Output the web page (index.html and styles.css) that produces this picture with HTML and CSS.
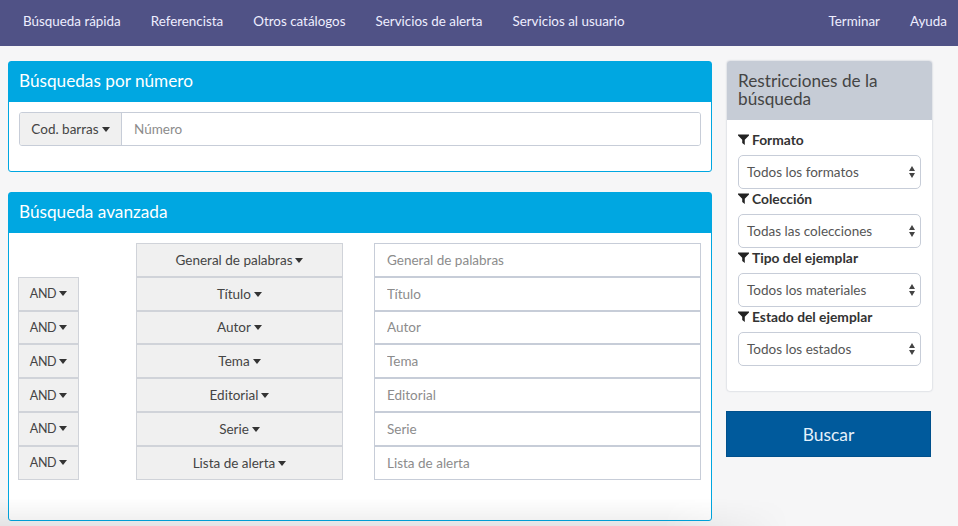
FILE: index.html
```html
<!DOCTYPE html>
<html lang="es">
<head>
  <meta charset="utf-8">
  <title>Búsqueda avanzada</title>
  <link rel="stylesheet" href="styles.css">
</head>
<body>
  <nav class="topbar">
    <ul class="menu">
      <li>Búsqueda rápida</li>
      <li>Referencista</li>
      <li>Otros catálogos</li>
      <li>Servicios de alerta</li>
      <li>Servicios al usuario</li>
    </ul>
    <ul class="menu">
      <li>Terminar</li>
      <li>Ayuda</li>
    </ul>
  </nav>

  <div class="page">
    <main class="main-col">
      <section class="panel panel-number">
        <h2 class="panel-title">Búsquedas por número</h2>
        <div class="number-body">
          <div class="input-group">
            <button class="addon">Cod. barras<span class="caret"></span></button>
            <input class="group-input" type="text" placeholder="Número">
          </div>
        </div>
      </section>

      <section class="panel panel-advanced">
        <h2 class="panel-title">Búsqueda avanzada</h2>
        <div class="adv-grid">
          <span></span>
          <button class="drop">General de palabras<span class="caret"></span></button>
          <input class="field" type="text" placeholder="General de palabras">

          <button class="drop op">AND<span class="caret"></span></button>
          <button class="drop">Título<span class="caret"></span></button>
          <input class="field" type="text" placeholder="Título">

          <button class="drop op">AND<span class="caret"></span></button>
          <button class="drop">Autor<span class="caret"></span></button>
          <input class="field" type="text" placeholder="Autor">

          <button class="drop op">AND<span class="caret"></span></button>
          <button class="drop">Tema<span class="caret"></span></button>
          <input class="field" type="text" placeholder="Tema">

          <button class="drop op">AND<span class="caret"></span></button>
          <button class="drop">Editorial<span class="caret"></span></button>
          <input class="field" type="text" placeholder="Editorial">

          <button class="drop op">AND<span class="caret"></span></button>
          <button class="drop">Serie<span class="caret"></span></button>
          <input class="field" type="text" placeholder="Serie">

          <button class="drop op">AND<span class="caret"></span></button>
          <button class="drop">Lista de alerta<span class="caret"></span></button>
          <input class="field" type="text" placeholder="Lista de alerta">
        </div>
      </section>
    </main>

    <aside class="side-col">
      <section class="side-panel">
        <h2 class="side-title">Restricciones de la búsqueda</h2>
        <div class="side-body">
          <label class="filter-label"><svg class="funnel" viewBox="0 0 12 12"><path d="M0 0.5h12v1L7.4 6.4V12L4.6 9.8V6.4L0 1.5z"/></svg>Formato</label>
          <div class="select-box">Todos los formatos<span class="updown"></span></div>
          <label class="filter-label"><svg class="funnel" viewBox="0 0 12 12"><path d="M0 0.5h12v1L7.4 6.4V12L4.6 9.8V6.4L0 1.5z"/></svg>Colección</label>
          <div class="select-box">Todas las colecciones<span class="updown"></span></div>
          <label class="filter-label"><svg class="funnel" viewBox="0 0 12 12"><path d="M0 0.5h12v1L7.4 6.4V12L4.6 9.8V6.4L0 1.5z"/></svg>Tipo del ejemplar</label>
          <div class="select-box">Todos los materiales<span class="updown"></span></div>
          <label class="filter-label"><svg class="funnel" viewBox="0 0 12 12"><path d="M0 0.5h12v1L7.4 6.4V12L4.6 9.8V6.4L0 1.5z"/></svg>Estado del ejemplar</label>
          <div class="select-box">Todos los estados<span class="updown"></span></div>
        </div>
      </section>
      <button class="search-btn">Buscar</button>
    </aside>
  </div>

  <div class="bottom-shade"></div>
</body>
</html>
```

FILE: styles.css
```css
* {
  box-sizing: border-box;
}

html, body {
  height: 100%;
  overflow: hidden;
}

body {
  position: relative;
  margin: 0;
  background: #f6f6f7;
  color: #444;
  font-family: "Lato", "Open Sans", sans-serif;
  font-size: 13.5px;
}

button, input {
  font-family: inherit;
  font-size: inherit;
}

.topbar {
  display: flex;
  justify-content: space-between;
  height: 46px;
  padding: 0 11px 0 23px;
  background: #505286;
  color: #eef;
  font-size: 13.4px;
}

.menu {
  display: flex;
  gap: 30px;
  margin: 0;
  padding: 0;
  list-style: none;
  line-height: 43px;
}

.page {
  display: flex;
  align-items: flex-start;
  padding: 15px 0 0 8px;
}

.main-col {
  width: 704px;
}

.panel {
  background: #fff;
  border: 1px solid #00a7e1;
  border-radius: 3px;
}

.panel-number {
  height: 111px;
  margin-bottom: 20px;
}

.panel-advanced {
  height: 329px;
}

.panel-title {
  height: 40px;
  margin: 0;
  padding: 0 10px;
  background: #00a7e1;
  color: #fff;
  font-size: 17.2px;
  font-weight: 400;
  line-height: 38px;
}

.number-body {
  padding: 10px 10px 0;
}

.input-group {
  display: flex;
  height: 34px;
  border: 1px solid #c7cdd8;
  border-radius: 3px;
  overflow: hidden;
}

.addon {
  width: 102px;
  padding: 0;
  background: #f0f0f0;
  border: 0;
  border-right: 1px solid #c7cdd8;
  color: #444;
}

.group-input {
  flex: 1;
  min-width: 0;
  padding: 0 12px;
  border: 0;
}

input::placeholder {
  color: #8c8c8c;
  opacity: 1;
}

.caret {
  display: inline-block;
  margin-left: 3px;
  vertical-align: 2px;
  border-top: 5px solid #333;
  border-left: 4.5px solid transparent;
  border-right: 4.5px solid transparent;
}

.adv-grid {
  display: grid;
  grid-template-columns: 61px 264px 358px;
  grid-auto-rows: 33.8px;
  padding: 10px 0 0 9px;
}

.adv-grid .drop:nth-child(3n+2) {
  margin-left: 57px;
  width: 207px;
}

.drop {
  padding: 0;
  background: #f0f0f0;
  border: 1px solid #d0d3d9;
  color: #444;
}

.op {
  font-size: 12.5px;
  letter-spacing: -0.4px;
}

.op .caret {
  margin-left: 3px;
}

.field {
  justify-self: end;
  width: 327px;
  padding: 0 12px;
  background: #fff;
  border: 1px solid #c7cdd8;
}

.side-col {
  width: 205px;
  margin-left: 14px;
}

.side-panel {
  width: 205px;
  height: 330px;
  margin-left: 1px;
  background: #fff;
  border-radius: 3px;
  box-shadow: 0 0 2px #b4b9c4;
}

.side-title {
  margin: 0;
  height: 59px;
  padding: 11px 10px 0 11px;
  background: #c6ccd6;
  border-radius: 3px 3px 0 0;
  color: #444;
  font-size: 17.2px;
  font-weight: 400;
  line-height: 18px;
}

.side-body {
  padding: 10px 11px 0;
}

.filter-label {
  display: block;
  height: 25px;
  color: #333;
  font-weight: 700;
  font-size: 13.8px;
  line-height: 20px;
}

.funnel {
  width: 11px;
  height: 11px;
  margin-right: 3px;
  fill: #222;
}

.select-box {
  position: relative;
  height: 34px;
  padding-left: 8px;
  border: 1px solid #c7cdd8;
  border-radius: 5px;
  color: #555;
  line-height: 32px;
}

.updown {
  position: absolute;
  top: 10px;
  right: 4px;
  width: 7px;
  height: 12px;
}

.updown::before,
.updown::after {
  content: "";
  position: absolute;
  left: 0;
  border-left: 3.5px solid transparent;
  border-right: 3.5px solid transparent;
}

.updown::before {
  top: 0;
  border-bottom: 5px solid #444;
}

.updown::after {
  bottom: 0;
  border-top: 5px solid #444;
}

.search-btn {
  display: block;
  width: 205px;
  height: 46px;
  margin-top: 20px;
  background: #005a9c;
  border: 1px solid #00508c;
  color: #e4f1fb;
  font-size: 17.4px;
}

/* soft grey shadow along the bottom edge, lies over the panel */
.bottom-shade {
  position: absolute;
  bottom: 0;
  left: 0;
  width: 790px;
  height: 28px;
  background: linear-gradient(rgba(0, 0, 0, 0), rgba(0, 0, 0, 0.07));
  -webkit-mask-image: linear-gradient(to right, #000 84%, transparent);
  mask-image: linear-gradient(to right, #000 84%, transparent);
  pointer-events: none;
}
```
